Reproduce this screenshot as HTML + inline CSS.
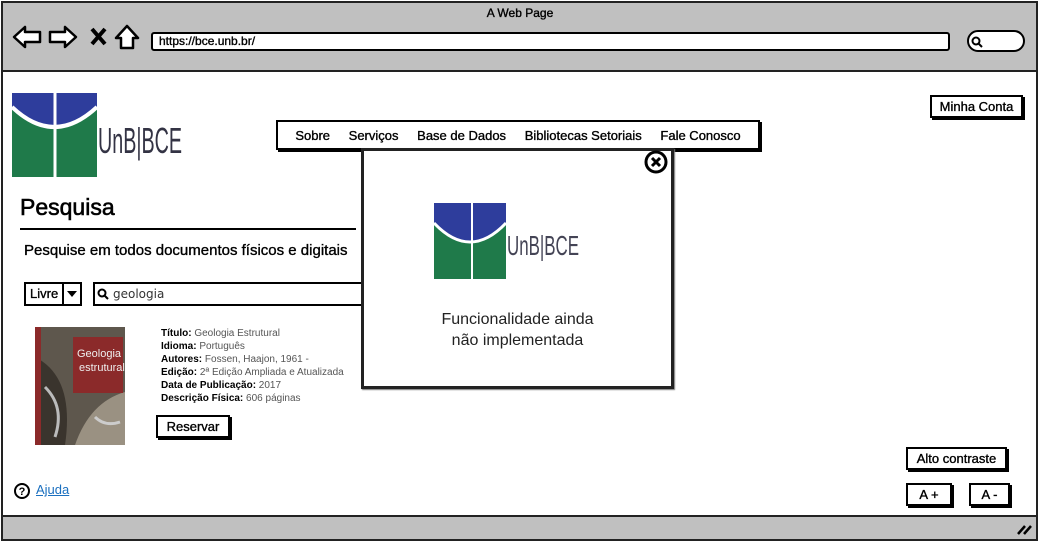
<!DOCTYPE html>
<html><head><meta charset="utf-8"><style>
*{margin:0;padding:0;box-sizing:border-box}
body{width:1040px;height:542px;position:relative;background:#fff;font-family:"Liberation Sans",sans-serif;overflow:hidden;color:#000}
.a{position:absolute}
.s{-webkit-text-stroke:0.35px #000}
.btn{position:absolute;border:2px solid #000;background:#fff;box-shadow:2px 2px 0 #000;font-size:13px;display:flex;align-items:center;justify-content:center;-webkit-text-stroke:0.35px #000}
.det{font-family:"Liberation Sans",sans-serif;font-size:10px;color:#555;line-height:13px;white-space:nowrap}
.det b{color:#000}
</style></head><body>
<div class="a" style="left:1px;top:1px;width:1037px;height:540px;border:2px solid #222;background:#fff"></div>
<div class="a" style="left:3px;top:3px;width:1033px;height:69px;background:#c0c0c0;border-bottom:2px solid #222"></div>
<div class="a" style="left:3px;top:515px;width:1033px;height:24px;background:#c0c0c0;border-top:2px solid #222"></div>
<div class="a s" style="left:0;top:6px;width:1040px;text-align:center;font-size:12px">A Web Page</div>
<svg class="a" style="left:10px;top:22px" width="135" height="30" viewBox="0 0 135 30">
<path d="M4 15 L15 5 L15 10 L30 10 L30 20 L15 20 L15 25 Z" fill="#fff" stroke="#000" stroke-width="2.5" stroke-linejoin="round"/>
<path d="M66 15 L55 5 L55 10 L40 10 L40 20 L55 20 L55 25 Z" fill="#fff" stroke="#000" stroke-width="2.5" stroke-linejoin="round"/>
<path d="M82 7 L95 22 M95 7 L82 22" stroke="#000" stroke-width="4"/>
<path d="M106 16 L117 4 L128 16 L123 16 L123 26 L111 26 L111 16 Z" fill="#fff" stroke="#000" stroke-width="2.5" stroke-linejoin="round"/>
</svg>
<div class="a s" style="left:151px;top:32px;width:799px;height:19px;border:2px solid #000;border-radius:3px;background:#fff;font-size:12px;padding-left:6px;line-height:15px">https://bce.unb.br/</div>
<div class="a" style="left:967px;top:30px;width:58px;height:22px;border:2.5px solid #000;border-radius:11px;background:#fff"></div>
<svg class="a" style="left:971px;top:36px" width="12" height="12"><circle cx="5" cy="5" r="3.5" fill="none" stroke="#000" stroke-width="2"/><path d="M7.5 7.5 L11 11" stroke="#000" stroke-width="2"/></svg>

<svg class="a" style="left:12px;top:93px" width="172" height="86" viewBox="0 0 172 86">
<rect x="0" y="0" width="85" height="84" fill="#1f7a4a"/>
<path d="M0 0 H85 V14 Q42 52 0 14 Z" fill="#2e3d9c"/>
<path d="M0 14 Q42 54 85 14" fill="none" stroke="#fff" stroke-width="4"/>
<path d="M43 0 V86" stroke="#fff" stroke-width="3"/>
<text x="86" y="60" font-family="Liberation Sans" font-size="36" fill="#334" textLength="84" lengthAdjust="spacingAndGlyphs">UnB|BCE</text>
</svg>

<div class="a s" style="left:276px;top:120px;width:484px;height:30px;border:2px solid #000;background:#fff;box-shadow:2px 2px 0 #000;display:flex;align-items:center;justify-content:space-around;padding:0 8px;font-size:13px">
<span>Sobre</span><span>Serviços</span><span>Base de Dados</span><span>Bibliotecas Setoriais</span><span>Fale Conosco</span></div>

<div class="a s" style="left:20px;top:194px;font-size:23px;-webkit-text-stroke:0.6px #000">Pesquisa</div>
<div class="a" style="left:20px;top:228px;width:336px;height:2px;background:#000"></div>
<div class="a s" style="left:24px;top:242px;font-size:15px">Pesquise em todos documentos físicos e digitais</div>

<div class="a s" style="left:24px;top:282px;width:58px;height:24px;border:2px solid #000;background:#fff;font-size:13px;line-height:20px;padding-left:4px">Livre</div>
<div class="a" style="left:62px;top:282px;width:2px;height:24px;background:#000"></div>
<div class="a" style="left:67px;top:291px;border-left:5px solid transparent;border-right:5px solid transparent;border-top:6px solid #000"></div>
<div class="a" style="left:93px;top:282px;width:270px;height:24px;border:2px solid #000;background:#fff;font-family:'DejaVu Sans',sans-serif;font-size:12px;line-height:20px;padding-left:18px;color:#333">geologia</div>
<svg class="a" style="left:97px;top:288px" width="12" height="12"><circle cx="5" cy="5" r="3.5" fill="none" stroke="#000" stroke-width="2"/><path d="M7.5 7.5 L11 11" stroke="#000" stroke-width="2"/></svg>

<svg class="a" style="left:35px;top:327px" width="90" height="118">
<rect width="90" height="118" fill="#5e574d"/>
<path d="M0 30 Q40 50 30 118 L0 118Z" fill="#3a342d"/>
<path d="M40 118 Q55 75 90 65 V118Z" fill="#9a9182"/>
<path d="M10 60 Q30 80 20 110" stroke="#bbb" stroke-width="3" fill="none"/>
<path d="M60 90 Q70 100 85 95" stroke="#ccc" stroke-width="3" fill="none"/>
<rect x="38" y="10" width="50" height="56" fill="#8b2a2a"/>
<rect x="0" y="0" width="6" height="118" fill="#8b2a2a"/>
<text x="42" y="30" font-size="11" fill="#eee" font-family="Liberation Sans">Geologia</text>
<text x="44" y="44" font-size="11" fill="#eee" font-family="Liberation Sans">estrutural</text>
</svg>
<div class="a det" style="left:161px;top:327px">
<b>Título:</b> Geologia Estrutural<br><b>Idioma:</b> Português<br><b>Autores:</b> Fossen, Haajon, 1961 -<br><b>Edição:</b> 2ª Edição Ampliada e Atualizada<br><b>Data de Publicação:</b> 2017<br><b>Descrição Física:</b> 606 páginas</div>
<div class="btn" style="left:156px;top:415px;width:74px;height:23px">Reservar</div>

<svg class="a" style="left:13px;top:482px" width="18" height="18"><circle cx="9" cy="9" r="7" fill="none" stroke="#000" stroke-width="2"/><text x="9" y="13" text-anchor="middle" font-size="11" font-weight="bold" font-family="Liberation Sans">?</text></svg>
<div class="a" style="left:36px;top:482px;font-size:13px;color:#1a6fbf;text-decoration:underline">Ajuda</div>

<div class="btn" style="left:930px;top:95px;width:93px;height:23px">Minha Conta</div>
<div class="btn" style="left:906px;top:447px;width:101px;height:23px">Alto contraste</div>
<div class="btn" style="left:906px;top:483px;width:46px;height:23px">A +</div>
<div class="btn" style="left:969px;top:483px;width:41px;height:23px">A -</div>
<svg class="a" style="left:1016px;top:522px" width="16" height="14"><path d="M2 12 L9 4 M8 12 L15 4" stroke="#000" stroke-width="2.5"/></svg>

<div class="a" style="left:361px;top:148px;width:313px;height:241px;border:3px solid #222;background:#fff;box-shadow:1px 1px 1px #777"></div>
<svg class="a" style="left:643px;top:150px" width="26" height="24"><circle cx="13" cy="12" r="10" fill="#fff" stroke="#000" stroke-width="3"/><path d="M9 8 L17 16 M17 8 L9 16" stroke="#000" stroke-width="3"/></svg>
<svg class="a" style="left:434px;top:203px" width="146" height="78" viewBox="0 0 146 78">
<rect x="0" y="0" width="72" height="76" fill="#1f7a4a"/>
<path d="M0 0 H72 V20 Q36 56 0 20 Z" fill="#2e3d9c"/>
<path d="M0 20 Q36 58 72 20" fill="none" stroke="#fff" stroke-width="3"/>
<path d="M38 0 V76" stroke="#fff" stroke-width="2"/>
<text x="73" y="52" font-family="Liberation Sans" font-size="28" fill="#445" textLength="72" lengthAdjust="spacingAndGlyphs">UnB|BCE</text>
</svg>
<div class="a" style="left:361px;top:309px;width:313px;text-align:center;font-family:'Liberation Sans',sans-serif;font-size:16px;line-height:21px;color:#222">Funcionalidade ainda<br>não implementada</div>
</body></html>
